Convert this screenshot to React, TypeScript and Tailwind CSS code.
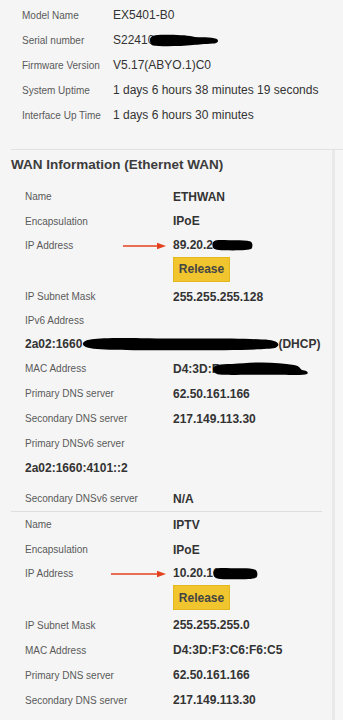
import React from "react";

const Blob = ({ w, h, className = "" }: { w: number; h: number; className?: string }) => (
  <svg width={w} height={h} viewBox="0 0 100 12" preserveAspectRatio="none" className={"inline-block " + className}>
    <path d="M1,6 C1,1.5 8,0.5 30,1 C55,1.5 80,0.5 94,2.5 C99,3.5 100,7 97,9.5 C90,11.5 60,11.5 30,11.3 C10,11.2 1,10.5 1,6 Z" fill="#000" />
  </svg>
);

const Arrow = ({ left, w }: { left: string; w: number }) => (
  <svg width={w} height={8} viewBox={`0 0 ${w} 8`} className={"absolute top-[8px] " + left}>
    <line x1="0" y1="4" x2={w - 7} y2="4" stroke="#e3421e" strokeWidth="1.4" />
    <polygon points={`${w - 9},0.8 ${w},4 ${w - 9},7.2`} fill="#e3421e" />
  </svg>
);

const TopRow = ({ label, children }: { label: string; children: React.ReactNode }) => (
  <div className="flex h-[25px] items-center">
    <div className="w-[91px] shrink-0 text-[10px] text-[#5a5a5a]">{label}</div>
    <div className="whitespace-nowrap text-[12px] text-[#333]">{children}</div>
  </div>
);

const Row = ({ label, children, h = "h-[25px]" }: { label: string; children?: React.ReactNode; h?: string }) => (
  <div className={"flex items-center pl-[14px] " + h}>
    <div className="w-[148px] shrink-0 text-[10px] text-[#5a5a5a]">{label}</div>
    <div className="whitespace-nowrap text-[12px] font-bold text-[#333]">{children}</div>
  </div>
);

const IpRow = ({ children, arrowLeft, arrowW }: { children: React.ReactNode; arrowLeft: string; arrowW: number }) => (
  <div className="flex items-start pb-[2.5px] pl-[14px]">
    <div className="relative w-[148px] shrink-0 text-[10px] leading-[23px] text-[#5a5a5a]">
      IP Address
      <Arrow left={arrowLeft} w={arrowW} />
    </div>
    <div className="flex flex-col items-start">
      <div className="flex items-center whitespace-nowrap text-[12px] font-bold leading-[23px] text-[#333]">{children}</div>
      <div className="flex h-[25px] w-[57px] items-center justify-center border border-[#e3b720] bg-[#f0c52e] text-[12px] font-bold text-[#444]">
        Release
      </div>
    </div>
  </div>
);

export default function App() {
  return (
    <div className="min-h-[720px] w-[343px] overflow-hidden bg-[#f5f5f5] font-['Liberation_Sans',Arial,sans-serif]">
      <div className="pl-[22px] pt-[2.5px]">
        <TopRow label="Model Name">EX5401-B0</TopRow>
        <TopRow label="Serial number">
          <span className="inline-flex items-center">
            S22410
            <svg width={70} height={13} viewBox="0 0 70 13" className="ml-[-5px] inline-block">
              <path d="M1,6 C1,1.5 6,0.5 20,0.8 C32,1 40,1.5 46,3 C55,3.5 66,3 68.5,5.5 C70,7.5 68,9.5 64,9.5 C55,10 50,10.5 44,11 C30,12.5 10,12.5 4,11.5 C1.5,10.8 1,8.5 1,6 Z" fill="#000" />
            </svg>
          </span>
        </TopRow>
        <TopRow label="Firmware Version">V5.17(ABYO.1)C0</TopRow>
        <TopRow label="System Uptime">1 days 6 hours 38 minutes 19 seconds</TopRow>
        <TopRow label="Interface Up Time">1 days 6 hours 30 minutes</TopRow>
      </div>

      <div className="ml-[11px] mt-[21px] border-t border-[#e2e2e2]">
        <div className="flex">
          <div className="w-[324px] shrink-0 border-r-[3px] border-[#e9e9e9] pb-[20px]">
            <div className="pt-[6px] text-[13.5px] font-bold leading-[18px] text-[#3c3c3c]">WAN Information (Ethernet WAN)</div>
            <div className="h-[10.5px]" />
            <Row label="Name">ETHWAN</Row>
            <Row label="Encapsulation" h="h-[24.5px]">IPoE</Row>
            <IpRow arrowLeft="left-[98px]" arrowW={43}>
              89.20.2
              <Blob w={41} h={12} className="ml-[-1px]" />
            </IpRow>
            <Row label="IP Subnet Mask">255.255.255.128</Row>
            <Row label="IPv6 Address" h="h-[23px]" />
            <div className="flex h-[24px] items-center whitespace-nowrap pl-[14px] text-[12px] font-bold text-[#333]">
              2a02:1660
              <Blob w={200} h={14} className="ml-[-1px]" />
              <span className="ml-[-3px]">(DHCP)</span>
            </div>
            <Row label="MAC Address">
              <span className="inline-flex items-center">
                D4:3D:F
                <svg width={97} height={14} viewBox="0 0 97 14" className="ml-[-7px] inline-block">
                  <path d="M1,7 C1,3 8,2 20,2 C30,1.5 38,0.3 50,0.5 C62,0.8 72,1.5 82,3 C88,4 88,7 90,8 C95,8.5 97,10.5 95,12 C92,13.5 80,13 70,12.8 C50,12.6 25,13.2 10,12.8 C3,12.5 1,10 1,7 Z" fill="#000" />
                </svg>
              </span>
            </Row>
            <Row label="Primary DNS server">62.50.161.166</Row>
            <Row label="Secondary DNS server">217.149.113.30</Row>
            <Row label="Primary DNSv6 server" />
            <div className="mb-[7px] flex h-[23px] items-center pl-[14px] text-[12px] font-bold text-[#333]">2a02:1660:4101::2</div>
            <Row label="Secondary DNSv6 server">N/A</Row>
            <div className="mr-[10px] border-t border-[#dedede]" />
            <Row label="Name">IPTV</Row>
            <Row label="Encapsulation">IPoE</Row>
            <IpRow arrowLeft="left-[86px]" arrowW={55}>
              10.20.16
              <Blob w={45} h={13} className="ml-[-7px]" />
            </IpRow>
            <Row label="IP Subnet Mask">255.255.255.0</Row>
            <Row label="MAC Address">D4:3D:F3:C6:F6:C5</Row>
            <Row label="Primary DNS server">62.50.161.166</Row>
            <Row label="Secondary DNS server">217.149.113.30</Row>
          </div>
          <div className="flex-1 bg-[#f6f6f6]" />
        </div>
      </div>
    </div>
  );
}
